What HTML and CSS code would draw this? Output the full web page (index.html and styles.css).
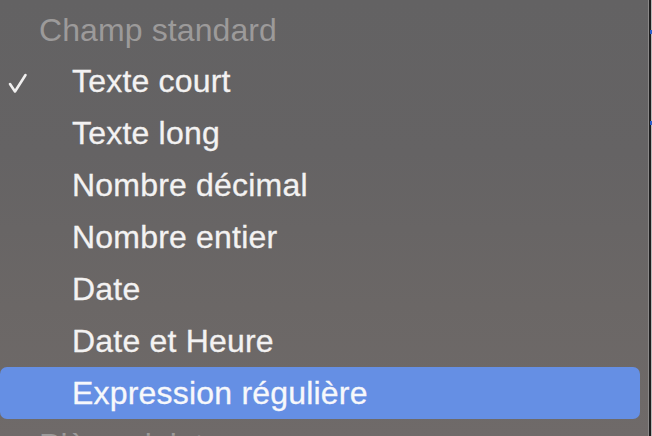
FILE: index.html
```html
<!DOCTYPE html>
<html lang="fr">
<head>
<meta charset="utf-8">
<title>Menu</title>
<link rel="stylesheet" href="styles.css">
</head>
<body>
<div class="screen">
  <div class="menu">
    <div class="header">Champ standard</div>
    <div class="item">
      <span class="check"><svg width="20" height="22" viewBox="0 0 20 22"><path d="M2 12 L7 19.5 L17.5 3" fill="none" stroke="#f1f0f0" stroke-width="2.6" stroke-linecap="round" stroke-linejoin="round"/></svg></span>
      <span class="label">Texte court</span>
    </div>
    <div class="item"><span class="check"></span><span class="label">Texte long</span></div>
    <div class="item"><span class="check"></span><span class="label">Nombre décimal</span></div>
    <div class="item"><span class="check"></span><span class="label">Nombre entier</span></div>
    <div class="item"><span class="check"></span><span class="label">Date</span></div>
    <div class="item"><span class="check"></span><span class="label">Date et Heure</span></div>
    <div class="item selected"><span class="check"></span><span class="label">Expression régulière</span></div>
    <div class="header">Pièces jointes</div>
  </div>
  <div class="edge">
    <div class="edge-light"></div>
    <div class="edge-dark"><span class="mark m1"></span><span class="mark m2"></span></div>
    <div class="edge-back"></div>
  </div>
</div>
</body>
</html>
```
FILE: styles.css
```css
html, body {
  margin: 0;
  padding: 0;
  height: 100%;
  overflow: hidden;
}
body {
  font-family: "Liberation Sans", Arial, sans-serif;
  background: #6a6767;
}
.screen {
  display: flex;
  width: 652px;
  height: 436px;
  overflow: hidden;
}
.menu {
  width: 648px;
  flex: none;
  padding-top: 4px;
  background: linear-gradient(180deg, #636263 0%, #656364 35%, #6b6766 70%, #6f6a69 100%);
  box-sizing: border-box;
  padding-right: 8px;
}
.header {
  height: 51px;
  line-height: 52px;
  font-size: 32px;
  padding-left: 39px;
  color: #9c9a9a;
  white-space: nowrap;
  letter-spacing: 0.1px;
}
.item {
  display: flex;
  align-items: center;
  height: 52px;
  line-height: 52px;
  font-size: 32px;
  color: #f3f2f2;
  border-radius: 7px;
  white-space: nowrap;
}
.label {
  -webkit-text-stroke: 0.3px currentColor;
  letter-spacing: 0.2px;
  margin-left: -1px;
}
.check {
  width: 73px;
  flex: none;
  display: flex;
  align-items: center;
  padding-left: 8px;
  box-sizing: border-box;
  height: 52px;
}
.check svg {
  display: block;
  margin-top: 3px;
}
.selected {
  background: #658fe4;
  color: #f7f8fb;
}
.edge {
  flex: none;
  width: 4px;
  display: flex;
}
.edge-light {
  width: 1px;
  background: #8a8888;
}
.edge-dark {
  width: 2px;
  background: #1e1e1f;
  position: relative;
}
.edge-back {
  width: 1px;
  background: #b9b9b9;
}
.mark {
  position: absolute;
  left: 1px;
  width: 2px;
  height: 4px;
  background: #2c5fc9;
}
.m1 { top: 30px; }
.m2 { top: 121px; }
```
